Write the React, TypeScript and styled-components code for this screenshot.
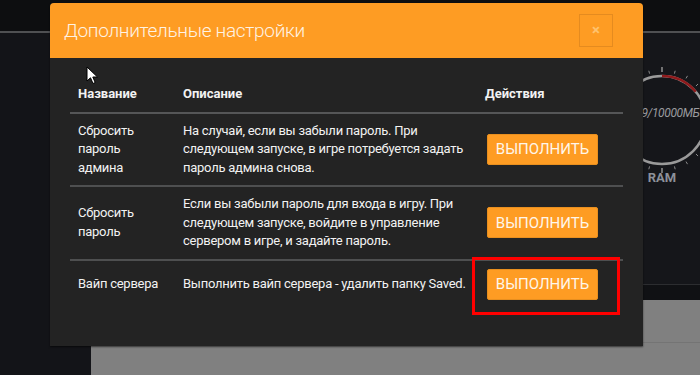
import React from 'react';
import styled, { createGlobalStyle } from 'styled-components';

const GlobalStyle = createGlobalStyle`
  html, body {
    margin: 0;
    padding: 0;
    background: #131418;
  }
  * {
    box-sizing: border-box;
  }
`;

const Screen = styled.div`
  position: relative;
  width: 700px;
  height: 375px;
  overflow: hidden;
  background: #131418;
  font-family: Roboto, 'Liberation Sans', sans-serif;
  display: flex;
  flex-direction: column;
`;

const TopBar = styled.div`
  height: 33px;
  flex-shrink: 0;
  background: #0d0e10;
  border-bottom: 2px solid #4f5052;
`;

const Body = styled.div`
  flex: 1;
  display: flex;
`;

const Sidebar = styled.div`
  width: 91px;
  flex-shrink: 0;
  background: #131418;
`;

const Content = styled.div`
  flex: 1;
  min-width: 0;
  display: flex;
  flex-direction: column;
`;

const Dashboard = styled.div`
  height: 252px;
  display: flex;
  justify-content: flex-end;
  padding-top: 31px;
  background: #15161a;
  border-bottom: 1px solid #2c2d30;
`;

const Strip = styled.div`
  height: 15px;
  background: #101114;
`;

const GrayPanel = styled.div`
  flex: 1;
  background: #808080;
  padding-top: 42px;
`;

const PanelLine = styled.div`
  height: 1px;
  background: #747474;
`;

const GaugeBox = styled.div`
  position: relative;
  width: 100px;
  margin-right: -12px;
  flex-shrink: 0;
  display: flex;
  flex-direction: column;
  align-items: center;
`;

const GaugeValue = styled.div`
  position: absolute;
  top: 42px;
  left: 50%;
  transform: translateX(-51%);
  font-size: 12px;
  font-style: italic;
  letter-spacing: -0.4px;
  color: #9a9b9f;
  white-space: nowrap;
`;

const GaugeLabel = styled.div`
  margin-top: -6px;
  font-size: 13px;
  font-weight: 700;
  color: #8c9099;
`;

const Modal = styled.div`
  position: absolute;
  left: 50px;
  top: 3px;
  width: 593px;
  height: 343px;
  background: #232323;
  border-radius: 4px 4px 0 0;
  box-shadow: 0 1px 2px rgba(0, 0, 0, 0.6);
  display: flex;
  flex-direction: column;
`;

const Header = styled.div`
  height: 55px;
  flex-shrink: 0;
  background: #fe9c23;
  border-radius: 4px 4px 0 0;
  display: flex;
  align-items: center;
  justify-content: space-between;
  padding: 0 30px 0 14px;
`;

const Title = styled.div`
  font-size: 19px;
  font-weight: 300;
  letter-spacing: -0.3px;
  color: #fff3e4;
`;

const CloseButton = styled.div`
  width: 34px;
  height: 33px;
  border: 1px solid #e58b1f;
  display: flex;
  align-items: center;
  justify-content: center;
  color: #ffc26d;
  font-size: 15px;
  font-weight: 700;
  line-height: 1;
`;

const ModalBody = styled.div`
  position: relative;
  flex: 1;
  padding: 19px 20px;
`;

const Table = styled.table`
  width: 100%;
  border-collapse: collapse;
  table-layout: fixed;
  color: #f2f2f2;
  font-size: 13px;
  line-height: 18.5px;
`;

const HeadCell = styled.th<{ width?: number }>`
  text-align: left;
  font-weight: 700;
  padding: 8px 8px;
  width: ${({ width }) => (width ? `${width}px` : 'auto')};
  border-bottom: 2px solid #555657;
`;

const Row = styled.tr`
  & + & {
    border-top: 2px solid #4e4f50;
  }
`;

const Cell = styled.td<{ $narrow?: boolean }>`
  padding: 8px ${({ $narrow }) => ($narrow ? '12px' : '2px')} 8px 8px;
  vertical-align: middle;
  letter-spacing: -0.25px;
`;

const ActionButton = styled.div`
  display: inline-flex;
  align-items: center;
  justify-content: center;
  margin-left: 2px;
  width: 111px;
  height: 31px;
  background: #fe9c23;
  border: 1px solid #e88f1f;
  border-radius: 2px;
  color: #fff6ea;
  font-size: 15px;
  letter-spacing: 0;
`;

const Highlight = styled.div`
  position: absolute;
  left: 422px;
  top: 199px;
  width: 148px;
  height: 58px;
  border: 3px solid #ff0000;
  pointer-events: none;
`;

const Cursor = styled.svg`
  position: absolute;
  left: 36px;
  top: 8px;
`;

const rows = [
  {
    name: 'Сбросить пароль админа',
    desc: 'На случай, если вы забыли пароль. При следующем запуске, в игре потребуется задать пароль админа снова.',
  },
  {
    name: 'Сбросить пароль',
    desc: 'Если вы забыли пароль для входа в игру. При следующем запуске, войдите в управление сервером в игре, и задайте пароль.',
  },
  {
    name: 'Вайп сервера',
    desc: 'Выполнить вайп сервера - удалить папку Saved.',
  },
];

const Gauge = () => {
  const cx = 50;
  const cy = 50;
  const r = 44;
  const ticks = Array.from({ length: 24 }, (_, i) => i * 15);
  const pt = (deg: number, rad: number) => {
    const a = ((deg - 90) * Math.PI) / 180;
    return [cx + rad * Math.cos(a), cy + rad * Math.sin(a)];
  };
  const [rx1, ry1] = pt(0, r);
  const [rx2, ry2] = pt(50, r);
  return (
    <GaugeBox>
      <svg width="100" height="112" viewBox="0 -6 100 112">
        <circle cx={cx} cy={cy} r={r} fill="none" stroke="#9a9a9a" strokeWidth="2.5" />
        <path
          d={`M ${rx1} ${ry1} A ${r} ${r} 0 0 1 ${rx2} ${ry2}`}
          fill="none"
          stroke="#8f1a1c"
          strokeWidth="2.5"
        />
        {ticks.map((d) => {
          const big = d === 0 || d === 180;
          const [x1, y1] = pt(d, r + 4);
          const [x2, y2] = pt(d, r + (big ? 9 : 7));
          return (
            <line key={d} x1={x1} y1={y1} x2={x2} y2={y2} stroke="#8a8a8a" strokeWidth={big ? 1.6 : 1} />
          );
        })}
      </svg>
      <GaugeValue>4329/10000МБ</GaugeValue>
      <GaugeLabel>RAM</GaugeLabel>
    </GaugeBox>
  );
};

export default function App() {
  return (
    <>
      <GlobalStyle />
      <Screen>
        <TopBar />
        <Body>
          <Sidebar />
          <Content>
            <Dashboard>
              <Gauge />
            </Dashboard>
            <Strip />
            <GrayPanel>
              <PanelLine />
            </GrayPanel>
          </Content>
        </Body>
        <Modal>
          <Header>
            <Title>Дополнительные настройки</Title>
            <CloseButton>×</CloseButton>
          </Header>
          <ModalBody>
            <Table>
              <thead>
                <tr>
                  <HeadCell width={105}>Название</HeadCell>
                  <HeadCell width={302}>Описание</HeadCell>
                  <HeadCell>Действия</HeadCell>
                </tr>
              </thead>
              <tbody>
                {rows.map((r) => (
                  <Row key={r.name}>
                    <Cell $narrow>{r.name}</Cell>
                    <Cell>{r.desc}</Cell>
                    <Cell>
                      <ActionButton>ВЫПОЛНИТЬ</ActionButton>
                    </Cell>
                  </Row>
                ))}
              </tbody>
            </Table>
            <Highlight />
            <Cursor width="13" height="19" viewBox="0 0 13 19">
              <path d="M1 1 L1 15 L4.5 11.8 L7 17.5 L9.2 16.5 L6.8 11 L11.5 11 Z" fill="#fff" stroke="#000" strokeWidth="1" />
            </Cursor>
          </ModalBody>
        </Modal>
      </Screen>
    </>
  );
}
